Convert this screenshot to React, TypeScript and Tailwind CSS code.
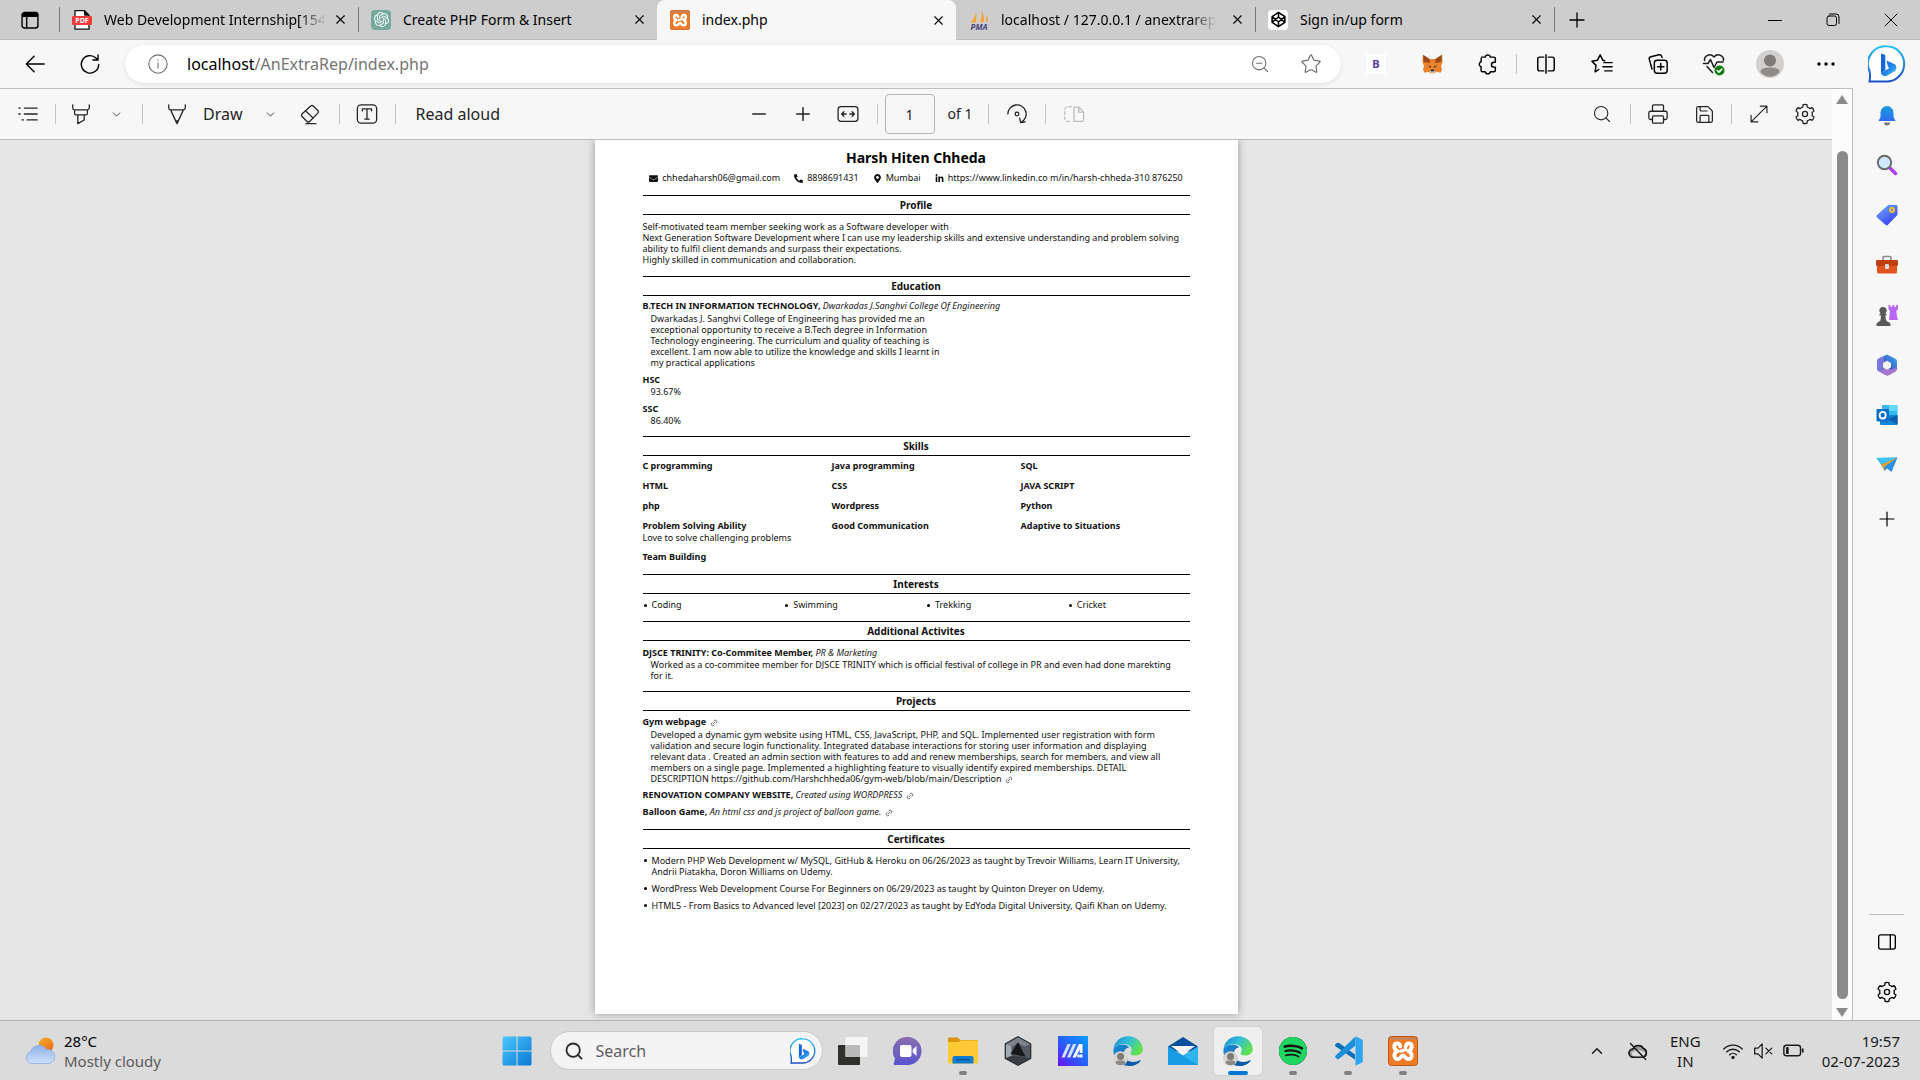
import { useId } from 'react';
import type { ReactNode } from 'react';
import { Plus, X, Star, ChevronDown, ChevronUp, Search, ZoomOut, Printer, Save, Link2 } from 'lucide-react';
import { SiOpenai, SiSpotify } from 'react-icons/si';
import { FaLinkedinIn, FaPhoneAlt, FaMapMarkerAlt, FaEnvelope } from 'react-icons/fa';

type Kids = { children: ReactNode };

/* ---------- shared pieces ---------- */

function Cell({ label, className, children }: Kids & { label: string; className: string }) {
  return (
    <button type="button" aria-label={label} className={'flex h-full shrink-0 items-center justify-center ' + className}>
      {children}
    </button>
  );
}

function Line({ size = 22, box = 24, width = 1.4, children }: Kids & { size?: number; box?: number; width?: number }) {
  return (
    <svg
      width={size}
      height={size}
      viewBox={`0 0 ${box} ${box}`}
      fill="none"
      stroke="currentColor"
      strokeWidth={width}
      strokeLinecap="round"
      strokeLinejoin="round"
      aria-hidden="true"
    >
      {children}
    </svg>
  );
}

function gearPath() {
  const at = (r: number, deg: number) => {
    const a = (deg * Math.PI) / 180;
    return `${(12 + r * Math.cos(a)).toFixed(2)} ${(12 + r * Math.sin(a)).toFixed(2)}`;
  };
  let d = '';
  for (let i = 0; i < 6; i++) {
    const c = i * 60 + 30;
    d += `${i ? 'L' : 'M'}${at(8, c - 22)} Q${at(7.2, c - 17)} ${at(10.2, c - 13)} Q${at(11, c)} ${at(10.2, c + 13)} Q${at(7.2, c + 17)} ${at(8, c + 22)} `;
  }
  return d + 'Z';
}

const GEAR = gearPath();

function Gear() {
  return (
    <Line>
      <path d={GEAR} />
      <circle cx="12" cy="12" r="2.8" />
    </Line>
  );
}

function BingLogo({ size }: { size: number }) {
  const id = useId();
  return (
    <svg width={size} height={size} viewBox="0 0 38 38" aria-hidden="true">
      <defs>
        <linearGradient id={id + 'r'} x1="0" y1="0" x2="0" y2="1">
          <stop offset="0" stopColor="#29c3f2" />
          <stop offset="1" stopColor="#1f4fc4" />
        </linearGradient>
        <linearGradient id={id + 'b'} x1="0" y1="0" x2="1" y2="1">
          <stop offset="0" stopColor="#1b5fd9" />
          <stop offset="0.5" stopColor="#1f7fe8" />
          <stop offset="1" stopColor="#3fd0e6" />
        </linearGradient>
      </defs>
      <path d="M19 1.2a17.6 17.6 0 1 1-1 35.3c-3 0-9 .2-16.500.1.6-3 .9-5 .2-10A17.700 17.700 0 0 1 19 1.200z" fill="#fff" stroke={`url(#${id}r)`} strokeWidth="2" />
      <path d="M13 8.500l4.300 1.600v15.200l-4.300 2.900z" fill="#1566dc" />
      <path d="M18.500 15.600l8.300 3.700c2 1.500 2.300 4.500.4 6.500l-7.700 4.800c-3 1.300-6 .2-6.500-2.600l8.200-4.700-1.400-2z" fill={`url(#${id}b)`} />
    </svg>
  );
}

/* ---------- tab strip ---------- */

function PdfIcon() {
  return (
    <svg width="20" height="20" viewBox="0 0 20 20" aria-hidden="true">
      <path d="M3 .7h9.500l4.500 4.500v14H3z" fill="#fff" stroke="#111" strokeWidth="1.300" />
      <path d="M12.500.7v4.500H17" fill="#111" stroke="#111" />
      <rect x="0" y="6" width="20" height="9" rx="1" fill="#f23b3b" />
      <text x="10" y="13" textAnchor="middle" fontSize="7" fontWeight="700" fontFamily="Noto Sans, sans-serif" fill="#fff">PDF</text>
    </svg>
  );
}

function XamppIcon({ size }: { size: number }) {
  return (
    <svg width={size} height={size} viewBox="0 0 30 30" aria-hidden="true">
      <rect x="0.500" y="0.500" width="29" height="29" rx="3" fill="#ef7a26" stroke="#b9561a" />
      <rect x="2" y="1.500" width="26" height="2.500" rx="1.200" fill="#c9845a" />
      <g fill="none" stroke="#fff" strokeWidth="3.800" strokeLinecap="round" strokeLinejoin="round">
        <path d="M12.300 10.500C11.500 6 6 6.500 6.300 11c.2 2.300 1.700 3.500 3.200 4.300C5 17 5.500 23.500 10 23c3.200-.4 3-3.500 5-3.500s1.800 3.100 5 3.500c4.500.5 5-6 .5-7.700 1.500-.8 3-2 3.200-4.300.3-4.500-5.200-5-6-.5" />
        <path d="M12.500 15.300l5.500-1.800" strokeWidth="3" />
      </g>
    </svg>
  );
}

function PmaIcon() {
  return (
    <svg width="20" height="20" viewBox="0 0 20 20" aria-hidden="true">
      <path d="M7 1.500c.8 3 .5 8-.5 11H1.500C5 9 6.500 5 7 1.500zM12.500.5c2 3 3 8 2.500 11.500l-4 .5c1.700-4 2-8 1.500-12zM16.500 4c1.500 2.500 2.500 5 2.500 7.500h-2c.3-2.500.2-5-.5-7.500z" fill="#f6a13a" />
      <path d="M9.500 5c.7 2.500.4 5.500-.5 7.500H7.800C9 10 9.400 7.500 9.500 5z" fill="#fbc57e" />
      <text x="10" y="19.500" textAnchor="middle" fontSize="8" fontWeight="700" fontStyle="italic" fontFamily="Noto Sans, sans-serif" fill="#45467d">PMA</text>
    </svg>
  );
}

function CodepenIcon() {
  return (
    <span className="flex size-5 items-center justify-center rounded-sm bg-white">
      <Line size={17} width={2.2}>
        <path d="M12 2l9 6v8l-9 6-9-6V8zM12 22v-6.500M21 8l-9 7.500L3 8M3 16l9-7.500 9 7.500M12 2v6.500" />
      </Line>
    </span>
  );
}

const TABS: { title: string; icon: ReactNode; active?: boolean; bar?: boolean; fade?: boolean }[] = [
  { title: 'Web Development Internship[154', icon: <PdfIcon />, bar: true, fade: true },
  {
    title: 'Create PHP Form & Insert',
    icon: (
      <span className="flex size-5 items-center justify-center rounded-sm bg-[#75a99c] text-white">
        <SiOpenai size={15} />
      </span>
    ),
    bar: true,
  },
  { title: 'index.php', icon: <XamppIcon size={20} />, active: true },
  { title: 'localhost / 127.0.0.1 / anextrarep', icon: <PmaIcon />, fade: true },
  { title: 'Sign in/up form', icon: <CodepenIcon />, bar: true },
];

function TabStrip() {
  return (
    <header className="flex h-10 shrink-0 items-stretch bg-[#cdcdcd]">
      <div className="flex w-[59px] shrink-0 border-b border-[#bcbcbc]">
        <Cell label="Tab actions" className="w-full">
          <Line size={20} width={1.700}>
            <rect x="2.500" y="3" width="19" height="18.500" rx="3" />
            <path d="M3 4.500h18v3H3z" fill="currentColor" />
            <path d="M8 8v13" />
          </Line>
        </Cell>
      </div>
      <div role="tablist" className="flex min-w-0 flex-1">
        {TABS.map((t) => (
          <div
            key={t.title}
            className={
              'flex w-full max-w-[299px] min-w-0 items-center pr-2 ' +
              (t.active ? 'rounded-t-lg bg-[#f7f7f7]' : 'border-b border-[#bcbcbc]')
            }
          >
            <span className={'h-[25px] w-px shrink-0 ' + (t.bar ? 'bg-[#7a7a7a]' : '')} />
            <button type="button" role="tab" aria-selected={!!t.active} className="ml-3 flex min-w-0 flex-1 items-center gap-3 text-left">
              <span className="shrink-0">{t.icon}</span>
              <span
                className={
                  'overflow-hidden text-sm whitespace-nowrap ' +
                  (t.fade ? '[mask-image:linear-gradient(to_right,black_88%,transparent)]' : '')
                }
              >
                {t.title}
              </span>
            </button>
            <button type="button" aria-label={'Close ' + t.title} className="ml-1 flex size-5 shrink-0 items-center justify-center">
              <X size={15} strokeWidth={1.800} />
            </button>
          </div>
        ))}
        <div className="flex flex-1 items-center border-b border-[#bcbcbc]">
          <span className="h-[25px] w-px bg-[#7a7a7a]" />
          <Cell label="New tab" className="w-[43px]">
            <Plus size={24} strokeWidth={1.300} />
          </Cell>
        </div>
      </div>
      <div className="flex shrink-0 border-b border-[#bcbcbc]">
        <Cell label="Minimize" className="w-[58px]">
          <Line size={14} box={14} width={1}><path d="M.5 7.500h13" /></Line>
        </Cell>
        <Cell label="Restore" className="w-[58px]">
          <Line size={14} box={14} width={1}>
            <rect x="1" y="3" width="9.500" height="9.500" rx="2" />
            <path d="M3.500 1h6.500a3 3 0 0 1 3 3v6.500" />
          </Line>
        </Cell>
        <Cell label="Close" className="w-[58px]">
          <Line size={14} box={14} width={1}><path d="M1 1l12 12M13 1L1 13" /></Line>
        </Cell>
      </div>
    </header>
  );
}

/* ---------- address bar ---------- */

function Fox() {
  return (
    <svg width="21" height="20" viewBox="0 0 21 20" aria-hidden="true">
      <path d="M1 .8l6.500 4.200h6L20 .8l.6 7-1.600 4 1 4-1.500 3-4-1-2.200 1.500H8.700L6.500 17.800l-4 1L1 15.800l1-4L.4 7.800z" fill="#e9822a" />
      <path d="M1 .8l6.500 4.200.5 4-6.300-1zM20 .8l-6.500 4.200-.5 4 6.300-1z" fill="#9a4a18" />
      <path d="M6 11l3 1.500-.5 1.500zM15 11l-3 1.500.5 1.500z" fill="#22303c" />
      <path d="M8.500 15.500h4l.5 2-1 1.200H9L8 17.500z" fill="#d8c9bb" />
      <path d="M9 15.500h3l.4 1.700H8.600z" fill="#16202a" />
    </svg>
  );
}

function AddressBar() {
  return (
    <div className="flex h-12 shrink-0 items-stretch bg-[#f7f7f7] pl-[7px]">
      <Cell label="Back" className="w-14">
        <Line width={1.500}><path d="M22 12H2.500M11 3.500L2.500 12l8.500 8.500" /></Line>
      </Cell>
      <Cell label="Refresh" className="w-[54px]">
        <Line width={1.500}><path d="M21.500 12.500A9.500 9.500 0 1 1 18.500 5.500L20.500 7.500M20.800 2v5.700h-5.700" /></Line>
      </Cell>
      <div className="my-[5px] ml-2 flex min-w-0 flex-1 items-center rounded-full bg-white pr-1 pl-[23px] shadow-[0_1px_4px_rgba(0,0,0,0.1)]">
        <button type="button" aria-label="View site information" className="text-[#6f6f6f]">
          <Line size={20} width={1.300}>
            <circle cx="12" cy="12" r="11" />
            <path d="M12 10.500v6.500M12 7v.5" />
          </Line>
        </button>
        <div className="relative ml-[19px] h-full min-w-0 flex-1 text-base">
          <input
            aria-label="Address"
            defaultValue="localhost/AnExtraRep/index.php"
            className="h-full w-full bg-transparent text-transparent caret-black outline-none"
          />
          <span aria-hidden="true" className="pointer-events-none absolute inset-0 flex items-center whitespace-pre">
            localhost<span className="text-[#737373]">/AnExtraRep/index.php</span>
          </span>
        </div>
        <Cell label="Zoom" className="w-12 text-[#6f6f6f]"><ZoomOut size={20} strokeWidth={1.300} /></Cell>
        <Cell label="Add to favorites" className="w-[53px] text-[#6f6f6f]"><Star size={22} strokeWidth={1.300} /></Cell>
      </div>
      <div className="ml-[7px] flex items-stretch">
        <Cell label="Bootstrap extension" className="w-14">
          <span className="flex size-5 items-center justify-center bg-white text-[11px] font-bold text-[#563d9c]">B</span>
        </Cell>
        <Cell label="Wallet extension" className="w-14"><Fox /></Cell>
        <Cell label="Extensions" className="w-14">
          <Line width={1.600}>
            <path d="M5 4.500h4a2.800 2.800 0 0 1 5.500 0h4a1.500 1.500 0 0 1 1.500 1.500v4h-1.500a2.700 2.700 0 0 0 0 5.400H20V19a1.500 1.500 0 0 1-1.500 1.500h-4a2.800 2.800 0 0 1-5.500 0H6A1.500 1.500 0 0 1 4.500 19v-4a2.800 2.800 0 0 1 0-5.400V6" />
          </Line>
        </Cell>
        <span className="mr-px h-5 w-px self-center bg-[#c6c6c6]" />
        <Cell label="Split screen" className="w-14">
          <Line width={1.600}><path d="M9.500 4.500H5a2 2 0 0 0-2 2v11a2 2 0 0 0 2 2h4.500M14.500 4.500H19a2 2 0 0 1 2 2v11a2 2 0 0 1-2 2h-4.500M12 2v20" /></Line>
        </Cell>
        <Cell label="Favorites" className="w-14">
          <Line width={1.600}><path d="M15 8.500l-2-.5-3-6-3 6-6 1 4.500 4.500-1 7 4-2.500M14 10.500h9M13 15h10M15 19.500h8" /></Line>
        </Cell>
        <Cell label="Collections" className="w-14">
          <Line width={1.600}>
            <rect x="8" y="8" width="14" height="14" rx="3" />
            <path d="M15 11.500v7M11.500 15h7M5.500 17.500L2.500 7a2.500 2.500 0 0 1 1.700-3L13 2a2.500 2.500 0 0 1 3 1.700L16.500 5" />
          </Line>
        </Cell>
        <Cell label="Browser essentials" className="w-14">
          <svg width="24" height="24" viewBox="0 0 24 24" fill="none" stroke="#1b1b1b" strokeWidth="1.500" strokeLinecap="round" strokeLinejoin="round" aria-hidden="true">
            <path d="M2.500 8.500C2 4 8 .5 12 5c4-4.500 10-1 9.500 3.500M1.500 11.500H6l2.500-4 3.500 8 3-5.500h6M5 14.500l5.500 6" />
            <circle cx="17.500" cy="18.500" r="5" fill="#107c10" stroke="none" />
            <path d="M15.300 18.500l1.600 1.600 3-3" stroke="#fff" />
          </svg>
        </Cell>
        <Cell label="Profile" className="w-14">
          <svg width="28" height="28" viewBox="0 0 28 28" aria-hidden="true">
            <circle cx="14" cy="14" r="14" fill="#d2d0ce" />
            <circle cx="14" cy="10.500" r="6" fill="#7f7b78" />
            <path d="M4.500 22c0-3.500 4-4.500 9.500-4.500s9.500 1 9.500 4.500a12 12 0 0 1-19 0z" fill="#8f8b88" />
          </svg>
        </Cell>
        <Cell label="Settings and more" className="w-14">
          <svg width="18" height="4" viewBox="0 0 18 4" aria-hidden="true">
            <circle cx="2" cy="2" r="1.700" /><circle cx="9" cy="2" r="1.700" /><circle cx="16" cy="2" r="1.700" />
          </svg>
        </Cell>
        <Cell label="Bing chat" className="w-[66px]"><BingLogo size={38} /></Cell>
      </div>
    </div>
  );
}

/* ---------- PDF toolbar ---------- */

function Rule({ className }: { className?: string }) {
  return <span className={'h-5 w-px shrink-0 bg-[#c4c4c4] ' + (className ?? '')} />;
}

function PdfToolbar() {
  return (
    <div className="grid h-[52px] shrink-0 grid-cols-[1fr_auto_1fr] items-center border-y border-[#bdbdbd] bg-[#f7f7f7] text-[#242424]">
      <div className="flex h-full items-center">
        <Cell label="Contents" className="w-[55px]">
          <Line><path d="M8 5.500h14M8 12h14M11 18.500h11M2 5.500h1.500M2 12h1.500M5.500 18.500H7" /></Line>
        </Cell>
        <Rule />
        <Cell label="Highlight" className="w-[50px]">
          <Line><path d="M3 2v3.500c0 1.200.6 2 2 2h14c1.400 0 2-.8 2-2V2M5 7.500v4c0 1 .6 1.500 1.500 1.500h11c.9 0 1.500-.5 1.500-1.500v-4M8.500 13v9.500l7-4V13" /></Line>
        </Cell>
        <Cell label="Highlight colors" className="w-5"><ChevronDown size={13} strokeWidth={1.500} /></Cell>
        <Rule className="ml-4" />
        <button type="button" className="ml-4 flex h-full items-center gap-2 text-base">
          <span className="flex w-9 justify-center">
            <Line><path d="M3 2v3.500c0 1.200.6 2 2 2h14c1.400 0 2-.8 2-2V2M5 7.500L12 22.500l7-15M10.500 19.500h3L12 22.500z" /></Line>
          </span>
          Draw
        </button>
        <Cell label="Draw options" className="ml-[18px] w-5"><ChevronDown size={13} strokeWidth={1.500} /></Cell>
        <Cell label="Erase" className="w-[58px]">
          <Line><path d="M12.800 3.200a2 2 0 0 1 2.800 0l5 5a2 2 0 0 1 0 2.800l-9 9.200a2 2 0 0 1-2.800 0l-5.500-5.400a2 2 0 0 1 0-2.800zM7 8.500l8.500 8M7.500 22.500h11" /></Line>
        </Cell>
        <Rule />
        <Cell label="Add text" className="w-[55px]">
          <Line><rect x="1.500" y="2" width="21" height="20" rx="4" /><path d="M7 8.500V6.500h10v2M12 6.500v11M9.500 17.500h5" /></Line>
        </Cell>
        <Rule />
        <button type="button" className="ml-5 h-full text-base whitespace-nowrap">Read aloud</button>
      </div>
      <div className="flex h-full items-center">
        <Cell label="Zoom out" className="w-14"><Line size={14} box={14} width={1.500}><path d="M.7 7h12.600" /></Line></Cell>
        <Cell label="Zoom in" className="w-8"><Line size={14} box={14} width={1.500}><path d="M.7 7h12.600M7 .7v12.600" /></Line></Cell>
        <Cell label="Fit to width" className="w-[58px]">
          <Line><rect x="1.200" y="4" width="21.600" height="16" rx="3" /><path d="M5 12h5M14 12h5M7.500 9.500L5 12l2.500 2.500M16.500 9.500L19 12l-2.500 2.500" /></Line>
        </Cell>
        <Rule />
        <input
          aria-label="Page number"
          defaultValue="1"
          className="ml-[7px] h-10 w-[50px] rounded-sm border border-[#b5b5b5] bg-[#f7f7f7] text-center text-sm"
        />
        <span className="ml-[13px] text-sm">of 1</span>
        <Rule className="ml-4" />
        <Cell label="Rotate" className="w-14">
          <Line><path d="M2 12a10 10 0 1 1 14.500 9M15 16.500l1 5 5-1" /><circle cx="12" cy="12" r="2" /></Line>
        </Cell>
        <Rule />
        <Cell label="Page view" className="w-[55px] text-[#bdbdbd]">
          <Line>
            <path d="M12 4.500v15.500h8.500a2 2 0 0 0 2-2v-8l-5-5.500zM17 4.500v5.500h5" />
            <path d="M9 4H5a3 3 0 0 0-3 3v10a3 3 0 0 0 3 3h4" strokeDasharray="3 2.500" />
          </Line>
        </Cell>
      </div>
      <div className="flex h-full items-center justify-end pr-2">
        <Cell label="Find" className="w-14"><Search size={20} strokeWidth={1.300} /></Cell>
        <Rule />
        <Cell label="Print" className="w-[54px]"><Printer size={22} strokeWidth={1.400} /></Cell>
        <Cell label="Save" className="mr-2 w-[38px]"><Save size={21} strokeWidth={1.400} /></Cell>
        <Rule />
        <Cell label="Full screen" className="w-[54px]">
          <Line size={20}><path d="M2.500 21.500l19-19M13.500 2.500h8v8M2.500 13.500v8h8" /></Line>
        </Cell>
        <Cell label="PDF settings" className="w-[38px]"><Gear /></Cell>
      </div>
    </div>
  );
}

/* ---------- resume page ---------- */

function Section({ title, className, children }: Kids & { title: string; className: string }) {
  return (
    <section className={className}>
      <h2 className="flex h-5 items-center justify-center border-y border-black text-[10px] font-bold">{title}</h2>
      {children}
    </section>
  );
}

function Title({ children }: Kids) {
  return <h3 className="leading-3 font-bold whitespace-nowrap">{children}</h3>;
}

function Sub({ children }: Kids) {
  return <span className="font-normal text-[#222] italic">{children}</span>;
}

function Chain({ name }: { name: string }) {
  return (
    <a href="#link" aria-label={name} className="ml-px inline-block align-middle text-[#444]">
      <Link2 size={8} className="-rotate-45" strokeWidth={2} />
    </a>
  );
}

const SKILLS = [
  'C programming', 'Java programming', 'SQL', 'HTML', 'CSS', 'JAVA SCRIPT', 'php', 'Wordpress', 'Python',
  'Problem Solving Ability', 'Good Communication', 'Adaptive to Situations', 'Team Building',
];

function Resume() {
  return (
    <article className="mx-auto w-[643px] shrink-0 bg-white px-12 pt-1.5 pb-[103px] text-[9px] leading-[11px] text-[#111] shadow-[0_0_8px_rgba(0,0,0,0.35)]">
      <h1 className="text-center text-sm leading-6 font-bold text-black">Harsh Hiten Chheda</h1>
      <address className="mt-0.5 mb-[11px] flex justify-center gap-3.5 leading-3 whitespace-nowrap not-italic">
        <span className="flex items-center gap-1"><FaEnvelope size={9} />chhedaharsh06@gmail.com</span>
        <span className="flex items-center gap-1"><FaPhoneAlt size={9} />8898691431</span>
        <span className="flex items-center gap-1"><FaMapMarkerAlt size={9} />Mumbai</span>
        <span className="flex items-center gap-1"><FaLinkedinIn size={9} />https://www.linkedin.co m/in/harsh-chheda-310 876250</span>
      </address>

      <Section title="Profile" className="pb-[11px]">
        <p className="mt-1.5 whitespace-nowrap">
          Self-motivated team member seeking work as a Software developer with<br />
          Next Generation Software Development where I can use my leadership skills and extensive understanding and problem solving<br />
          ability to fulfil client demands and surpass their expectations.<br />
          Highly skilled in communication and collaboration.
        </p>
      </Section>

      <Section title="Education" className="pb-2.5">
        <div className="mt-1 flex flex-col gap-1.5">
          <div>
            <Title>B.TECH IN INFORMATION TECHNOLOGY, <Sub>Dwarkadas J.Sanghvi College Of Engineering</Sub></Title>
            <p className="mt-px pl-2 whitespace-nowrap">
              Dwarkadas J. Sanghvi College of Engineering has provided me an<br />
              exceptional opportunity to receive a B.Tech degree in Information<br />
              Technology engineering. The curriculum and quality of teaching is<br />
              excellent. I am now able to utilize the knowledge and skills I learnt in<br />
              my practical applications
            </p>
          </div>
          <div><Title>HSC</Title><p className="pl-2">93.67%</p></div>
          <div><Title>SSC</Title><p className="pl-2">86.40%</p></div>
        </div>
      </Section>

      <Section title="Skills" className="pb-[11px]">
        <div className="mt-1 grid grid-cols-3 gap-x-5 gap-y-2">
          {SKILLS.map((s) => (
            <div key={s}>
              <Title>{s}</Title>
              {s === 'Problem Solving Ability' && <p className="whitespace-nowrap">Love to solve challenging problems</p>}
            </div>
          ))}
        </div>
      </Section>

      <Section title="Interests" className="pb-2.5">
        <ul className="mt-[5px] grid grid-cols-4 gap-x-5 leading-3">
          {['Coding', 'Swimming', 'Trekking', 'Cricket'].map((s) => (
            <li key={s} className="flex items-center gap-[5px] pl-px">
              <span className="size-[3px] rounded-full bg-black" />{s}
            </li>
          ))}
        </ul>
      </Section>

      <Section title="Additional Activites" className="pb-2.5">
        <div className="mt-1.5">
          <Title>DJSCE TRINITY: Co-Commitee Member, <Sub>PR &amp; Marketing</Sub></Title>
          <p className="pl-2 whitespace-nowrap">
            Worked as a co-commitee member for DJSCE TRINITY which is official festival of college in PR and even had done marekting<br />
            for it.
          </p>
        </div>
      </Section>

      <Section title="Projects" className="pb-[11px]">
        <div className="mt-[5px] flex flex-col gap-[5px]">
          <div>
            <Title>Gym webpage <Chain name="Gym webpage link" /></Title>
            <p className="mt-px pl-2 whitespace-nowrap">
              Developed a dynamic gym website using HTML, CSS, JavaScript, PHP, and SQL. Implemented user registration with form<br />
              validation and secure login functionality. Integrated database interactions for storing user information and displaying<br />
              relevant data . Created an admin section with features to add and renew memberships, search for members, and view all<br />
              members on a single page. Implemented a highlighting feature to visually identify expired memberships. DETAIL<br />
              DESCRIPTION https://github.com/Harshchheda06/gym-web/blob/main/Description <Chain name="Description link" />
            </p>
          </div>
          <Title>RENOVATION COMPANY WEBSITE, <Sub>Created using WORDPRESS</Sub> <Chain name="Renovation website link" /></Title>
          <Title>Balloon Game, <Sub>An html css and js project of balloon game.</Sub> <Chain name="Balloon game link" /></Title>
        </div>
      </Section>

      <Section title="Certificates" className="">
        <ul className="mt-1.5 flex flex-col gap-1.5 whitespace-nowrap">
          {[
            ['Modern PHP Web Development w/ MySQL, GitHub & Heroku on 06/26/2023 as taught by Trevoir Williams, Learn IT University,', 'Andrii Piatakha, Doron Williams on Udemy.'],
            ['WordPress Web Development Course For Beginners on 06/29/2023 as taught by Quinton Dreyer on Udemy.'],
            ['HTML5 - From Basics to Advanced level [2023] on 02/27/2023 as taught by EdYoda Digital University, Qaifi Khan on Udemy.'],
          ].map((lines) => (
            <li key={lines[0]} className="flex gap-[5px] pl-px">
              <span className="mt-1 size-[3px] shrink-0 rounded-full bg-black" />
              <span>{lines.map((l) => <span key={l} className="block">{l}</span>)}</span>
            </li>
          ))}
        </ul>
      </Section>
    </article>
  );
}

/* ---------- scrollbar and sidebar ---------- */

function ScrollBar() {
  return (
    <div className="flex w-5 shrink-0 flex-col items-center border-t border-[#bdbdbd] bg-[#fcfcfc] pt-1.5 pb-[3px]">
      <svg width="12" height="9" viewBox="0 0 12 9" aria-hidden="true"><path d="M6 0l6 9H0z" fill="#8b8b8b" /></svg>
      <div className="mt-[47px] mb-[9px] w-[11px] flex-1 rounded-full bg-[#8b8b8b]" />
      <svg width="12" height="9" viewBox="0 0 12 9" aria-hidden="true"><path d="M6 9l6-9H0z" fill="#8b8b8b" /></svg>
    </div>
  );
}

function Art({ children }: Kids) {
  return <svg width="22" height="22" viewBox="0 0 22 22" aria-hidden="true">{children}</svg>;
}

const APPS: [string, ReactNode][] = [
  ['Notifications', (
    <Art>
      <defs><linearGradient id="bell" x1="0" y1="0" x2="0" y2="1"><stop offset="0" stopColor="#1a9bdc" /><stop offset="1" stopColor="#2f6cf0" /></linearGradient></defs>
      <path d="M2.500 17l2-4V8.500a6.500 6.500 0 0 1 13 0V13l2 4z" fill="url(#bell)" />
      <path d="M8 18.500h6a3 3 0 0 1-6 0z" fill="#777" />
    </Art>
  )],
  ['Search', (
    <Art>
      <path d="M13.500 13.500l6 6" stroke="#b23df0" strokeWidth="3.500" strokeLinecap="round" />
      <circle cx="8.500" cy="8.500" r="6.700" fill="#cfe9fa" stroke="#6a6a6a" strokeWidth="2" />
    </Art>
  )],
  ['Shopping', (
    <Art>
      <defs><linearGradient id="tag" x1="0" y1="0" x2="0.700" y2="1"><stop offset="0" stopColor="#6fb6f8" /><stop offset="1" stopColor="#3a3bf0" /></linearGradient></defs>
      <path d="M12.500.8l7.500.2c1 0 1.500.6 1.500 1.500v7.500c0 .6-.2 1-.6 1.400l-9 9.300c-.8.8-1.600.8-2.400 0L1 13.500c-.8-.8-.8-1.800 0-2.500z" fill="url(#tag)" />
      <circle cx="16" cy="6" r="2.200" fill="#8a8ad8" stroke="#f3c52c" strokeWidth="1.700" />
    </Art>
  )],
  ['Tools', (
    <Art>
      <path d="M7 6V3.800C7 3 7.600 2.500 8.300 2.500h5.400c.7 0 1.300.5 1.300 1.300V6" fill="none" stroke="#8c8c8c" strokeWidth="1.600" />
      <rect x="1" y="10" width="20" height="9.500" rx="1.500" fill="#e2521c" />
      <rect x="0" y="6" width="22" height="6" rx="1.200" fill="#c03f10" />
      <rect x="9" y="10" width="4" height="5" rx="1" fill="#d9d9d9" />
    </Art>
  )],
  ['Games', (
    <Art>
      <path d="M12.500 1h2v2h1.800V1h2v2h1.800V1H22v4l-1.700 2 .7 6 1 3h-9l1-9-1.500-2z" fill="#b967f5" />
      <path d="M7 3a3.700 3.700 0 0 1 2.500 6.500l1 .5v1.500H9.300l.7 5 4 2.500c.7.600.8 3 0 3H1c-.8 0-.8-2.400 0-3l3.500-2.500.5-5H3.500V10l1-.5A3.700 3.700 0 0 1 7 3z" fill="#595959" />
    </Art>
  )],
  ['Microsoft 365', (
    <Art>
      <defs><linearGradient id="m365" x1="1" y1="0" x2="0" y2="1"><stop offset="0" stopColor="#39b4f2" /><stop offset="0.550" stopColor="#3b55c0" /><stop offset="1" stopColor="#a77be0" /></linearGradient></defs>
      <path d="M11 .6l8 4c1.200.7 2 1.700 2 3v7c0 1.300-.7 2.200-1.700 2.800l-6.500 3.700c-1 .6-2.400.6-3.500 0L3 17.500c-1.200-.7-2-1.700-2-3V7.500c0-1.300.7-2.300 1.800-2.900z" fill="url(#m365)" />
      <path d="M1 14.500V7.500c0-1.300.7-2.300 1.800-2.900L8 2v11.500L4.500 18C2 17 1 16 1 14.500z" fill="#7a78dc" />
      <path d="M8 14l8 1.500 4.500-2.500-.5 4.300-6.700 3.800c-1 .6-2.400.6-3.500 0L4.500 18z" fill="#a774cc" />
      <path d="M11 7.200l3.500 2v4l-3.500 2-3.500-2v-4z" fill="#f7f7f7" stroke="#f7f7f7" strokeLinejoin="round" />
    </Art>
  )],
  ['Outlook', (
    <Art>
      <rect x="6" y="1" width="15.500" height="12" rx="1" fill="#35b8f1" />
      <path d="M13 1h8.500v6H13z" fill="#5fd8fb" />
      <path d="M4 11l17.500 0V20a1 1 0 0 1-1 1H5a1 1 0 0 1-1-1z" fill="#1484d4" />
      <path d="M21.500 11v9.500L12 15z" fill="#0c5fb0" />
      <rect x="0.500" y="5" width="12.500" height="12.500" rx="1.300" fill="#0a6ec8" />
      <ellipse cx="6.700" cy="11.200" rx="3" ry="3.300" fill="none" stroke="#fff" strokeWidth="1.800" />
    </Art>
  )],
  ['Drop', (
    <Art>
      <path d="M.5 4L21.500 3.500 15.500 18l-4.500-3.500-2.500 2.500-3-6z" fill="#2f8fe8" />
      <path d="M.5 4L21.500 3.500 5.500 10.500z" fill="#3dc0f3" />
      <path d="M5.500 10.500l16-7L8.500 12.500v4.500z" fill="#f2a61d" />
    </Art>
  )],
];

function SideBar() {
  return (
    <nav aria-label="Sidebar" className="flex w-[68px] shrink-0 flex-col items-center border-l border-[#bdbdbd] bg-[#f7f7f7] pt-0.5 pb-[3px]">
      {APPS.map(([name, art]) => (
        <button key={name} type="button" aria-label={name} className="flex h-[50px] w-full items-center justify-center">{art}</button>
      ))}
      <button type="button" aria-label="Customize" className="mt-1 flex h-[50px] w-full items-center justify-center">
        <Line size={16} box={16} width={1.200}><path d="M1 8h14M8 1v14" /></Line>
      </button>
      <div className="mt-auto mb-0.5 h-px w-[35px] bg-[#c2c2c2]" />
      <button type="button" aria-label="Hide sidebar" className="flex h-[50px] w-full items-center justify-center">
        <Line size={20} width={1.600}><rect x="2" y="3.500" width="20" height="17" rx="2.500" /><path d="M16 3.500v17" /></Line>
      </button>
      <button type="button" aria-label="Sidebar settings" className="flex h-[50px] w-full items-center justify-center"><Gear /></button>
    </nav>
  );
}

/* ---------- taskbar ---------- */

function Edge() {
  const id = useId();
  return (
    <svg width="30" height="30" viewBox="0 0 30 30" aria-hidden="true">
      <defs>
        <linearGradient id={id + 't'} x1="0" y1="0" x2="1" y2="0.500">
          <stop offset="0" stopColor="#1c84cf" /><stop offset="0.500" stopColor="#2fc0d8" /><stop offset="1" stopColor="#62e04f" />
        </linearGradient>
        <linearGradient id={id + 'd'} x1="0" y1="0" x2="1" y2="1">
          <stop offset="0" stopColor="#1a91da" /><stop offset="1" stopColor="#0e4b94" />
        </linearGradient>
      </defs>
      <path d="M.5 13C1.500 5.500 7.500.3 15 .3 24 .3 29.800 7 29.800 13c0 4-3.300 6.500-7 6.500-3.500 0-5.300-1-5.300-2 0-.9 1.200-1.400 1.200-3.500C18.700 10.500 15 8 10.500 8 6 8 2.500 10 .5 13z" fill={`url(#${id}t)`} />
      <path d="M.5 13c2-3 5-4.500 9-4.500 3 0 5.500 1.300 6.500 3-4 .5-5.500 4-5 7.500.8 5 5 8.500 9.500 8.700 3 .1 5.500-1.500 7-3-2.500 3.500-7 5.200-12 5.200C6 29.900-.5 22 .5 13z" fill={`url(#${id}d)`} />
      <path d="M11 18c.5 5 4.500 8 9 8 3 0 5-.7 6.500-1.700.7-.4 1.400.3 1 .9-2.500 3.200-7 4.700-12 4.700-2.500-1.500-6-6-4.500-11.900z" fill="#0f5aa8" />
      <circle cx="7.500" cy="22.500" r="7.300" fill="#d6d4d1" />
      <circle cx="7.500" cy="20.500" r="3.500" fill="#7e7a77" />
      <path d="M2.300 27c.3-2.200 2.500-2.800 5.200-2.800s4.900.6 5.200 2.800a7.300 7.300 0 0 1-10.400 0z" fill="#8e8a87" />
    </svg>
  );
}

const PINNED: { name: string; art: ReactNode; state?: 'open' | 'active' }[] = [
  {
    name: 'Task view',
    art: (
      <svg width="30" height="28" viewBox="0 0 30 28" aria-hidden="true">
        <rect x="0" y="8" width="22" height="20" rx="1" fill="#2f2f2c" />
        <rect x="7.500" y="0" width="22" height="20" rx="1" fill="#f5f5f5" />
        <rect x="7.500" y="8" width="14.500" height="12" fill="#b9b9b9" />
      </svg>
    ),
  },
  {
    name: 'Chat',
    art: (
      <svg width="30" height="30" viewBox="0 0 30 30" aria-hidden="true">
        <defs><linearGradient id="chat" x1="0.500" y1="0" x2="0.500" y2="1"><stop offset="0" stopColor="#8a6fae" /><stop offset="1" stopColor="#5a54cf" /></linearGradient></defs>
        <path d="M15 1a14 14 0 1 1-1 28H1.500c-.8 0-1-.6-.8-1.200L2 22.500A14 14 0 0 1 15 1z" fill="url(#chat)" />
        <rect x="7" y="9" width="11.500" height="12" rx="2" fill="#fff" />
        <path d="M19.700 13.500l3.800-3.500v10l-3.800-3.500z" fill="#fff" />
      </svg>
    ),
  },
  {
    name: 'File Explorer',
    state: 'open',
    art: (
      <svg width="32" height="28" viewBox="0 0 32 28" aria-hidden="true">
        <path d="M1 2c0-1 .5-1.500 1.500-1.500h8L13.500 3H30c.8 0 1 .5 1 1.200V12H1z" fill="#d9960c" />
        <path d="M1 5h10l3-1.500h16c.7 0 1 .4 1 1V25c0 1-.5 1.500-1.500 1.500h-27C1.500 26.500 1 26 1 25z" fill="#fdc935" />
        <path d="M5.500 21a2 2 0 0 1 2-2h17a2 2 0 0 1 2 2v5.500h-21z" fill="#0f7cd0" />
        <path d="M9.500 22.700h13" stroke="#0a4c8c" strokeWidth="1.200" />
      </svg>
    ),
  },
  {
    name: 'Armoury',
    art: (
      <svg width="28" height="30" viewBox="0 0 28 30" aria-hidden="true">
        <path d="M14 .8l12.700 7v14.500l-12.700 7-12.700-7V7.800z" fill="#555b62" stroke="#24282c" strokeWidth="1.200" />
        <path d="M14 1.500l12 6.700-5.500 2.300-6.500-3.500-6.500 3.500L2 8.200z" fill="#7d838a" />
        <path d="M2 8.200l5.500 2.300v9.500L2 22z" fill="#a3a9b0" />
        <path d="M14 6l7.500 14.500L6.500 18z" fill="#15171a" />
        <path d="M2 22l5.500-2 13.500 1 5 1.500-12 6.200z" fill="#383d42" />
      </svg>
    ),
  },
  {
    name: 'MyASUS',
    art: (
      <svg width="30" height="30" viewBox="0 0 30 30" aria-hidden="true">
        <defs><linearGradient id="asus" x1="1" y1="0" x2="0" y2="1"><stop offset="0" stopColor="#0aa0ff" /><stop offset="0.550" stopColor="#2a5bff" /><stop offset="1" stopColor="#6d10f0" /></linearGradient></defs>
        <path d="M0 0h30v30H0z" fill="url(#asus)" />
        <path d="M3.500 21.500L9.500 8h3.300l-6 13.500zM9 21.500L15 8h3.300l-6 13.500z" fill="#d4deff" />
        <path d="M14.500 21.500L21 8h3.500v9h-2.800v-3.800L17.800 21.500z" fill="#fff" />
        <circle cx="20.500" cy="20" r="1.400" fill="#fff" />
        <path d="M21.700 18.500h2.800v3h-2.800z" fill="#fff" />
      </svg>
    ),
  },
  { name: 'Edge profile', art: <Edge /> },
  {
    name: 'Mail',
    art: (
      <svg width="30" height="29" viewBox="0 0 30 29" aria-hidden="true">
        <path d="M0 10.500L15 1l15 9.500-3 5H3z" fill="#0c4f9e" />
        <path d="M3 10h24l-12 9z" fill="#f4f4f4" />
        <path d="M0 10.500l15 9 15-9V29H0z" fill="#2fb5ee" />
        <path d="M0 10.500L30 29H0z" fill="#189be2" />
      </svg>
    ),
  },
  { name: 'Edge', art: <Edge />, state: 'active' },
  {
    name: 'Spotify',
    state: 'open',
    art: (
      <span className="flex size-7 items-center justify-center rounded-full bg-[#191414] text-[#1fd760]"><SiSpotify size={28} /></span>
    ),
  },
  {
    name: 'Visual Studio Code',
    state: 'open',
    art: (
      <svg width="30" height="30" viewBox="0 0 30 30" aria-hidden="true">
        <path d="M22 6.500v17L3 10.500c-.9-.7-1-1.500-.3-2.200L4.200 7c.5-.4 1.100-.4 1.700 0L22 19z" fill="#0f6fb8" />
        <path d="M22 23.500v-5L5.900 7 4.200 7 2.700 8.300c-.7.700-.6 1.400 0 2z" fill="#0f6fb8" />
        <path d="M22.500.5v9L5.900 23c-.6.4-1.200.4-1.700 0l-1.500-1.300c-.7-.7-.6-1.500 0-2.200z" fill="#1b8fd8" />
        <path d="M22.500.3l6 2.900c.9.400 1.300 1 1.300 2v19.600c0 1-.4 1.600-1.300 2l-6 2.900z" fill="#2fa5f0" />
      </svg>
    ),
  },
  { name: 'XAMPP', art: <XamppIcon size={30} />, state: 'open' },
];

function Taskbar() {
  return (
    <footer className="grid h-[60px] shrink-0 grid-cols-[1fr_auto_1fr] items-center border-t border-[#b0b0b0] bg-[#dbdbdb]">
      <button type="button" className="flex items-center gap-[9px] pl-[25px] text-left text-[15px] leading-5">
        <svg width="30" height="27" viewBox="0 0 30 27" aria-hidden="true">
          <defs>
            <linearGradient id="sun" x1="0" y1="0" x2="0.600" y2="1"><stop offset="0" stopColor="#efb32e" /><stop offset="1" stopColor="#f06a14" /></linearGradient>
            <linearGradient id="cloud" x1="0" y1="0" x2="0" y2="1"><stop offset="0" stopColor="#8fb1ec" /><stop offset="1" stopColor="#cfe0fa" /></linearGradient>
          </defs>
          <circle cx="21" cy="8" r="7.500" fill="url(#sun)" />
          <path d="M6 26.500A6 6 0 0 1 5.500 15 8.800 8.800 0 0 1 21.500 12.500 7 7 0 0 1 24 26.500z" fill="url(#cloud)" stroke="#8aa9e4" strokeWidth="0.800" />
        </svg>
        <span>
          <span className="block">28°C</span>
          <span className="block text-[#5c5c5c]">Mostly cloudy</span>
        </span>
      </button>
      <div className="flex h-full items-center">
        <Cell label="Start" className="w-[55px]">
          <svg width="30" height="30" viewBox="0 0 30 30" aria-hidden="true">
            <defs><linearGradient id="win" x1="0" y1="0" x2="1" y2="1" gradientUnits="objectBoundingBox"><stop offset="0" stopColor="#4cc8fb" /><stop offset="1" stopColor="#0a78d6" /></linearGradient></defs>
            <path d="M.5 2c0-.8.700-1.500 1.500-1.500h12.500v14H.5zM15.500.5H28c.8 0 1.500.7 1.500 1.500v12.500h-14zM.5 15.500h14v14H2c-.8 0-1.500-.7-1.500-1.500zM15.500 15.500h14V28c0 .8-.7 1.500-1.500 1.500H15.500z" fill="url(#win)" />
          </svg>
        </Cell>
        <label className="mr-[3px] ml-[5px] flex h-[39px] w-[273px] items-center rounded-full border border-[#c9c9c9] bg-[#f4f4f4] pr-1.5 pl-[13px]">
          <Search size={20} strokeWidth={2.200} className="text-[#2b2b2b]" />
          <input aria-label="Search" placeholder="Search" className="ml-3 min-w-0 flex-1 bg-transparent text-base outline-none placeholder:text-[#5e5e5e]" />
          <BingLogo size={26} />
        </label>
        {PINNED.map((p) => (
          <button key={p.name} type="button" aria-label={p.name} className="flex w-[55px] justify-center">
            <span
              className={
                'relative flex size-12 items-center justify-center rounded ' +
                (p.state === 'active' ? 'bg-[#efefef] shadow-[0_0_1px_rgba(0,0,0,0.3)]' : '')
              }
            >
              {p.art}
              {p.state && (
                <span
                  className={
                    'absolute bottom-0 h-1 rounded-full ' + (p.state === 'active' ? 'w-5 bg-[#0078d4]' : 'w-2 bg-[#808080]')
                  }
                />
              )}
            </span>
          </button>
        ))}
      </div>
      <div className="flex h-full items-center justify-end gap-[22px] pr-5 text-[15px] leading-5 text-[#1a1a1a]">
        <button type="button" aria-label="Show hidden icons"><ChevronUp size={18} strokeWidth={2} /></button>
        <button type="button" aria-label="OneDrive is offline">
          <Line size={20}>
            <path d="M6.500 19.500a5 5 0 0 1-.5-10 7 7 0 0 1 12.500-.5 5.500 5.500 0 0 1-.5 10.500z" fill="#9a9a9a" />
            <path d="M6 18.500l12 1 3-6-9-3-8 3z" fill="#dbdbdb" stroke="none" />
            <path d="M6.500 19.500a5 5 0 0 1-.5-10 7 7 0 0 1 12.500-.5 5.500 5.500 0 0 1-.5 10.500zM3 3l18 19" strokeWidth="1.800" />
          </Line>
        </button>
        <button type="button" className="text-center">
          <span className="block">ENG</span>
          <span className="block">IN</span>
        </button>
        <button type="button" aria-label="Network, volume and battery" className="flex items-center gap-2.5">
          <Line size={20} width={1.700}>
            <path d="M1 9.500a15.500 15.500 0 0 1 22 0M4.500 13a10.600 10.600 0 0 1 15 0M8 16.500a5.700 5.700 0 0 1 8 0" />
            <circle cx="12" cy="19.700" r="1.200" fill="currentColor" />
          </Line>
          <Line size={20} width={1.500}><path d="M2 8.500h4l5-5v17l-5-5H2zM15.500 8.500l7 7M22.500 8.500l-7 7" /></Line>
          <Line size={21} width={1.600}>
            <rect x="1" y="6" width="19" height="12" rx="3" />
            <path d="M4.500 9v6h1V9zM22.500 10.500v3" strokeWidth="2" fill="currentColor" />
          </Line>
        </button>
        <button type="button" className="-ml-1 text-right whitespace-nowrap">
          <span className="block">19:57</span>
          <span className="block">02-07-2023</span>
        </button>
      </div>
    </footer>
  );
}

export default function App() {
  return (
    <div className="flex h-screen flex-col overflow-hidden bg-[#e6e6e6] font-['Noto_Sans',sans-serif] text-black">
      <TabStrip />
      <AddressBar />
      <main className="flex min-h-0 flex-1">
        <div className="flex min-w-0 flex-1 flex-col">
          <PdfToolbar />
          <div className="min-h-0 flex-1 overflow-hidden">
            <Resume />
          </div>
        </div>
        <ScrollBar />
        <SideBar />
      </main>
      <Taskbar />
    </div>
  );
}
